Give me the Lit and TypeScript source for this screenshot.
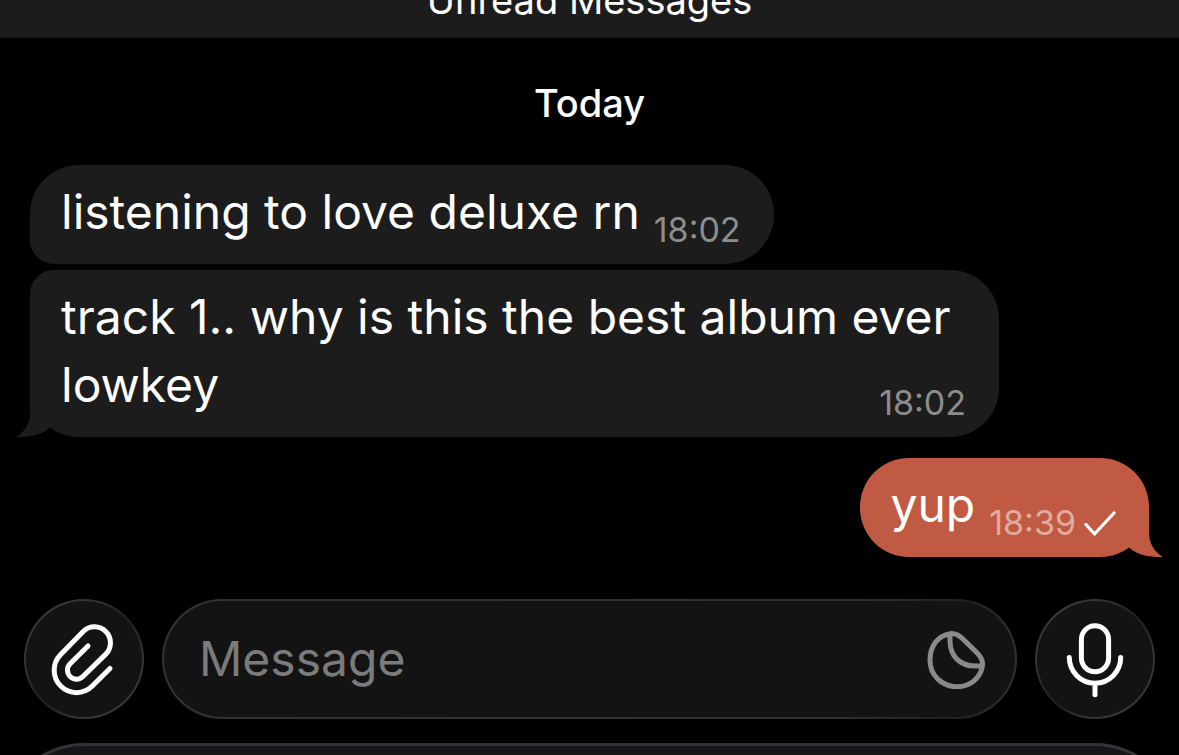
import { LitElement, html, css, svg, nothing } from "lit";
import { customElement, property } from "lit/decorators.js";

interface Message {
  text: string;
  time: string;
  own?: boolean;
  last?: boolean;
}

const messages: Message[] = [
  { text: "listening to love deluxe rn", time: "18:02" },
  { text: "track 1.. why is this the best album ever lowkey", time: "18:02", last: true },
  { text: "yup", time: "18:39", own: true, last: true },
];

const paperclip = svg`<path d="M86 68.4 68.3 86.1A22.3 22.3 0 0 1 36.7 54.5L59.7 31A16 16 0 0 1 82.3 53.6L58.9 76.5A9 9 0 0 1 46.1 63.7L64 46" />`;
const microphone = svg`<rect x="46.4" y="25.7" width="27.2" height="46" rx="13.6" /><path d="M34.3 57.5a25.7 25.7 0 0 0 51.4 0M60 83.5V94.7" />`;

@customElement("chat-bubble")
export class ChatBubble extends LitElement {
  @property({ attribute: false }) message!: Message;

  static styles = css`
    :host {
      display: flex;
    }
    .bubble {
      position: relative;
      display: flow-root;
      box-sizing: border-box;
      max-width: calc(100% - 150px);
      padding: 13px 33px 14px 31px;
      border-radius: 49px 49px 49px 24px;
      background: #1c1c1c;
      color: #fff;
      font-size: 48px;
      line-height: 68px;
    }
    .last {
      border-radius: 24px 49px 49px 49px;
    }
    .own {
      margin-left: auto;
      border-radius: 49px;
      background: #c15a42;
    }
    .meta {
      float: right;
      display: flex;
      align-items: center;
      gap: 8px;
      margin: 32px 0 0 14px;
      color: #8d8d8d;
      font-size: 34px;
      line-height: 40px;
    }
    .own .meta {
      color: #e0aca0;
    }
    .check {
      width: 32px;
      height: 26px;
      fill: none;
      stroke: #fff;
      stroke-width: 3.2;
      stroke-linecap: round;
      stroke-linejoin: round;
    }
    .tail {
      position: absolute;
      left: -14px;
      bottom: 0;
      width: 50px;
      height: 50px;
      fill: #1c1c1c;
    }
    .own .tail {
      left: auto;
      right: -14px;
      transform: scaleX(-1);
      fill: #c15a42;
    }
  `;

  render() {
    const { text, time, own, last } = this.message;
    return html`<div class="bubble ${last ? "last" : ""} ${own ? "own" : ""}">
      ${last
        ? html`<svg class="tail" viewBox="0 0 50 50" aria-hidden="true">
            <path d="M14 0V26C14 35 9.5 44 .5 50 12 50 25 49 34 40.500L44 30V0Z" />
          </svg>`
        : nothing}
      <span>${text}</span>
      <span class="meta">
        <time>${time}</time>
        ${own
          ? html`<svg class="check" viewBox="0 0 32 26" role="img" aria-label="Sent">
              <path d="M2 14.500 10.500 24 30 3" />
            </svg>`
          : nothing}
      </span>
    </div>`;
  }
}

@customElement("app-root")
export class AppRoot extends LitElement {
  static styles = css`
    :host {
      display: flex;
      flex-direction: column;
      height: 100vh;
      overflow: hidden;
      background: #000;
      color: #fff;
      font-family: Inter, "Liberation Sans", sans-serif;
    }
    .unread {
      display: flex;
      flex: none;
      align-items: flex-end;
      justify-content: center;
      box-sizing: border-box;
      height: 38px;
      padding-bottom: 13px;
      overflow: hidden;
      border-bottom: 1px solid #111;
      background: #1c1c1c;
      font-size: 38px;
      line-height: 48px;
    }
    .day {
      margin: 41px 0 38px;
      font-size: 38px;
      font-weight: 500;
      line-height: 48px;
      text-align: center;
    }
    .messages {
      display: flex;
      flex: none;
      flex-direction: column;
      gap: 6px;
      padding: 0 30px;
    }
    .reply {
      margin-top: 15px;
    }
    .composer {
      display: flex;
      flex: none;
      gap: 18px;
      margin-top: auto;
      padding: 24px;
    }
    .glass {
      box-sizing: border-box;
      height: 120px;
      border: 2px solid transparent;
      border-radius: 60px;
      background:
        linear-gradient(#131313, #131313) padding-box,
        linear-gradient(135deg, #3c3c3c, #333 30%, #202020 50%, #333 70%, #3c3c3c) border-box;
    }
    .round {
      display: grid;
      flex: none;
      place-items: center;
      width: 120px;
      padding: 0;
    }
    .glyph {
      width: 116px;
      height: 116px;
      fill: none;
      stroke: #fff;
      stroke-width: 5;
      stroke-linecap: round;
      stroke-linejoin: round;
    }
    .field {
      display: flex;
      flex: 1;
      align-items: center;
      min-width: 0;
      padding: 0 29px 0 35px;
      background:
        linear-gradient(#131313, #131313) padding-box,
        linear-gradient(100deg, #333, #303030 80%, #202020 92%, #333) border-box;
    }
    .input {
      flex: 1;
      min-width: 0;
      padding: 0;
      border: 0;
      outline: 0;
      background: none;
      color: #fff;
      font: inherit;
      font-size: 48px;
      line-height: 68px;
    }
    .input::placeholder {
      color: #7b7b7b;
      opacity: 1;
    }
    .sticker {
      display: grid;
      padding: 0;
      border: 0;
      background: none;
    }
    .sticker-glyph {
      width: 60px;
      height: 60px;
      fill: none;
      stroke: #8a8a8a;
      stroke-width: 5;
      stroke-linejoin: round;
    }
    .keyboard {
      flex: none;
      box-sizing: border-box;
      height: 12px;
      overflow: hidden;
    }
    .keyboard-panel {
      box-sizing: border-box;
      height: 200px;
      border: 3px solid #343434;
      border-radius: 84px;
      background: #161618;
    }
  `;

  render() {
    return html`
      <header class="unread">Unread Messages</header>
      <div class="day">Today</div>
      <main class="messages">
        ${messages.map(
          (m) => html`<chat-bubble class=${m.own ? "reply" : ""} .message=${m}></chat-bubble>`
        )}
      </main>
      <form class="composer" @submit=${(e: Event) => e.preventDefault()}>
        <button class="glass round" type="button" aria-label="Attach">
          <svg class="glyph" viewBox="2 1 116 116" aria-hidden="true">${paperclip}</svg>
        </button>
        <div class="glass field">
          <input class="input" type="text" placeholder="Message" aria-label="Message" />
          <button class="sticker" type="button" aria-label="Stickers">
            <svg class="sticker-glyph" viewBox="0 -1 60 60" aria-hidden="true">
              <path
                d="M24 3.700C29 3 33.500 5.500 38 10L50 21.700C55.500 27 57.500 31 56.300 36.500 54 48.500 44 56.700 31 56.700 16 56.700 4 45.500 4 30 4 16 12 5.500 24 3.700ZM24 4.500V11C24 26 34 36 49 36H56"
              />
            </svg>
          </button>
        </div>
        <button class="glass round" type="button" aria-label="Record voice message">
          <svg class="glyph" viewBox="2 1 116 116" aria-hidden="true">${microphone}</svg>
        </button>
      </form>
      <div class="keyboard"><div class="keyboard-panel"></div></div>
    `;
  }
}
